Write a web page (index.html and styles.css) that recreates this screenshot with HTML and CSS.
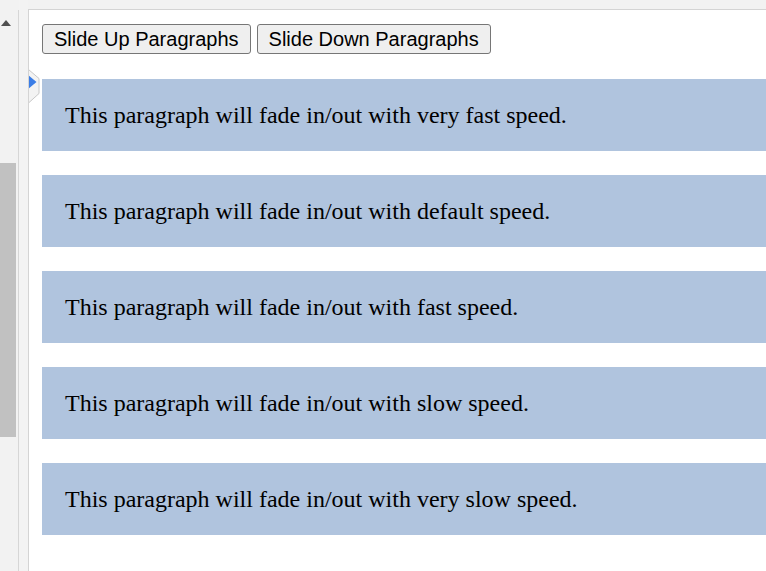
FILE: index.html
```html
<!DOCTYPE html>
<html>
<head>
<meta charset="utf-8">
<link rel="stylesheet" href="styles.css">
</head>
<body>
  <div class="scroll">
    <svg class="arrow" width="10" height="6" viewBox="0 0 10 6"><polygon points="0,6 5,0 10,6" fill="#505050"/></svg>
    <div class="thumb"></div>
  </div>
  <div class="gutter"></div>
  <div class="main">
    <svg class="handle" width="12" height="35" viewBox="0 0 12 35">
      <polygon points="0.5,0.5 11,9.5 11,24.5 0.5,34" fill="#f3f3f3" stroke="#c8c8c8" stroke-width="1"/>
      <polygon points="0,6 8.5,13 0,20" fill="#3b7de6"/>
    </svg>
    <div class="buttons">
      <button class="btn">Slide Up Paragraphs</button>
      <button class="btn">Slide Down Paragraphs</button>
    </div>
    <p class="para">This paragraph will fade in/out with very fast speed.</p>
    <p class="para">This paragraph will fade in/out with default speed.</p>
    <p class="para">This paragraph will fade in/out with fast speed.</p>
    <p class="para">This paragraph will fade in/out with slow speed.</p>
    <p class="para">This paragraph will fade in/out with very slow speed.</p>
  </div>
</body>
</html>
```

FILE: styles.css
```css
html, body {
  margin: 0;
  padding: 0;
  height: 100%;
}
body {
  display: flex;
  overflow: hidden;
  background: #f2f2f2;
}
.scroll {
  position: relative;
  width: 18px;
  margin-top: 10px;
  border-right: 1px solid #d6d6d6;
  flex: none;
}
.arrow {
  position: absolute;
  left: 1px;
  top: 10px;
}
.thumb {
  position: absolute;
  left: 0;
  top: 153px;
  width: 16px;
  height: 274px;
  background: #c1c1c1;
}
.gutter {
  width: 9px;
  flex: none;
  background: #f3f3f3;
}
.main {
  position: relative;
  flex: 1;
  margin-top: 9px;
  border-top: 1px solid #d4d4d4;
  border-left: 1px solid #d4d4d4;
  background: #ffffff;
  padding: 14px 0 0 13px;
  overflow: hidden;
}
.handle {
  position: absolute;
  left: -1px;
  top: 59px;
}
.buttons {
  display: flex;
  gap: 6px;
  margin-bottom: 25px;
}
.btn {
  font-family: "Liberation Sans", Arial, sans-serif;
  font-size: 20px;
  height: 30px;
  padding: 0 11px;
  margin: 0;
  color: #000;
  background: #efefef;
  border: 1px solid #767676;
  border-radius: 3px;
  line-height: 28px;
}
.para {
  margin: 0 0 24px 0;
  padding: 22px 23px;
  background: #b0c4de;
  font-family: "Liberation Serif", "Times New Roman", serif;
  font-size: 24px;
  line-height: 28px;
  color: #000;
}
```
